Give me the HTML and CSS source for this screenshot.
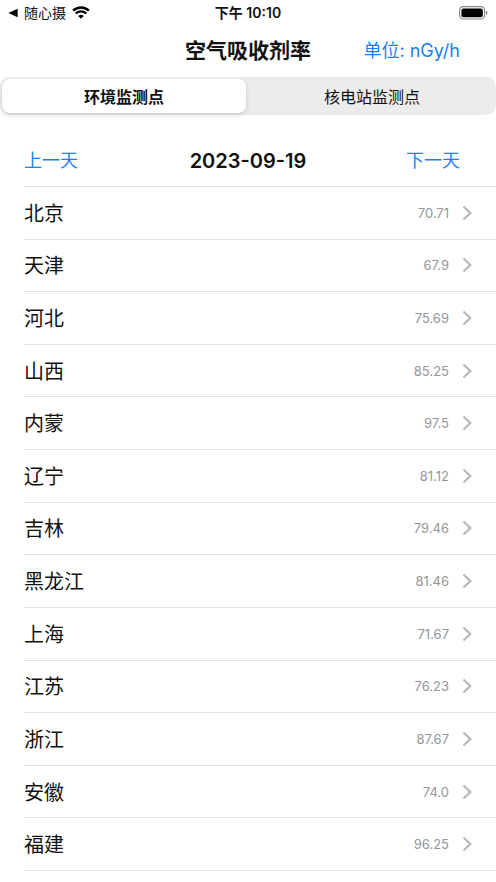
FILE: index.html
```html
<!DOCTYPE html>
<html lang="zh-CN">
<head>
<meta charset="utf-8">
<meta name="viewport" content="width=device-width, initial-scale=1">
<title>空气吸收剂率</title>
<link rel="stylesheet" href="styles.css">
</head>
<body>
<div class="status">
  <a class="status-back" href="#">
    <svg class="icon-back" viewBox="0 0 10 10" aria-hidden="true"><path d="M0.3 5 9.6 0.7V9.3Z"/></svg>
    <span>随心摄</span>
    <svg class="icon-wifi" viewBox="0 0 18 13" aria-hidden="true">
      <path d="M1.1 4.7a11.4 11.4 0 0 1 15.8 0M3.8 7.5a7.5 7.5 0 0 1 10.4 0"/>
      <path class="solid" d="M9 12.8 6.2 10a4 4 0 0 1 5.6 0Z"/>
    </svg>
  </a>
  <span class="status-time">下午 10:10</span>
  <svg class="icon-battery" viewBox="0 0 29 14" aria-hidden="true">
    <rect class="shell" x="0.6" y="0.6" width="25" height="12.4" rx="3.6"/>
    <rect x="2.4" y="2.4" width="21.4" height="8.8" rx="2"/>
    <path class="cap" d="M27 4.8c1.9.5 1.9 3.5 0 4Z"/>
  </svg>
</div>
<header class="bar navbar">
  <h1 class="title">空气吸收剂率</h1>
  <button class="link end" type="button">单位: nGy/h</button>
</header>
<div class="segments" role="tablist">
  <button class="segment selected" type="button" role="tab" aria-selected="true">环境监测点</button>
  <button class="segment" type="button" role="tab" aria-selected="false">核电站监测点</button>
</div>
<nav class="bar datebar">
  <button class="link start" type="button">上一天</button>
  <h2 class="date">2023-09-19</h2>
  <button class="link end" type="button">下一天</button>
</nav>
<ul class="list">
  <li><a class="row" href="#"><span class="name">北京</span><span class="value">70.71</span><svg class="chevron" viewBox="0 0 10 16" aria-hidden="true"><path d="M1.5 1.5 8.3 8l-6.8 6.5"/></svg></a></li>
  <li><a class="row" href="#"><span class="name">天津</span><span class="value">67.9</span><svg class="chevron" viewBox="0 0 10 16" aria-hidden="true"><path d="M1.5 1.5 8.3 8l-6.8 6.5"/></svg></a></li>
  <li><a class="row" href="#"><span class="name">河北</span><span class="value">75.69</span><svg class="chevron" viewBox="0 0 10 16" aria-hidden="true"><path d="M1.5 1.5 8.3 8l-6.8 6.5"/></svg></a></li>
  <li><a class="row" href="#"><span class="name">山西</span><span class="value">85.25</span><svg class="chevron" viewBox="0 0 10 16" aria-hidden="true"><path d="M1.5 1.5 8.3 8l-6.8 6.5"/></svg></a></li>
  <li><a class="row" href="#"><span class="name">内蒙</span><span class="value">97.5</span><svg class="chevron" viewBox="0 0 10 16" aria-hidden="true"><path d="M1.5 1.5 8.3 8l-6.8 6.5"/></svg></a></li>
  <li><a class="row" href="#"><span class="name">辽宁</span><span class="value">81.12</span><svg class="chevron" viewBox="0 0 10 16" aria-hidden="true"><path d="M1.5 1.5 8.3 8l-6.8 6.5"/></svg></a></li>
  <li><a class="row" href="#"><span class="name">吉林</span><span class="value">79.46</span><svg class="chevron" viewBox="0 0 10 16" aria-hidden="true"><path d="M1.5 1.5 8.3 8l-6.8 6.5"/></svg></a></li>
  <li><a class="row" href="#"><span class="name">黑龙江</span><span class="value">81.46</span><svg class="chevron" viewBox="0 0 10 16" aria-hidden="true"><path d="M1.5 1.5 8.3 8l-6.8 6.5"/></svg></a></li>
  <li><a class="row" href="#"><span class="name">上海</span><span class="value">71.67</span><svg class="chevron" viewBox="0 0 10 16" aria-hidden="true"><path d="M1.5 1.5 8.3 8l-6.8 6.5"/></svg></a></li>
  <li><a class="row" href="#"><span class="name">江苏</span><span class="value">76.23</span><svg class="chevron" viewBox="0 0 10 16" aria-hidden="true"><path d="M1.5 1.5 8.3 8l-6.8 6.5"/></svg></a></li>
  <li><a class="row" href="#"><span class="name">浙江</span><span class="value">87.67</span><svg class="chevron" viewBox="0 0 10 16" aria-hidden="true"><path d="M1.5 1.5 8.3 8l-6.8 6.5"/></svg></a></li>
  <li><a class="row" href="#"><span class="name">安徽</span><span class="value">74.0</span><svg class="chevron" viewBox="0 0 10 16" aria-hidden="true"><path d="M1.5 1.5 8.3 8l-6.8 6.5"/></svg></a></li>
  <li><a class="row" href="#"><span class="name">福建</span><span class="value">96.25</span><svg class="chevron" viewBox="0 0 10 16" aria-hidden="true"><path d="M1.5 1.5 8.3 8l-6.8 6.5"/></svg></a></li>
</ul>
</body>
</html>
```
FILE: styles.css
```css
* {
  box-sizing: border-box;
}

body {
  margin: 0;
  min-height: 100vh;
  display: flex;
  flex-direction: column;
  background: #fff;
  color: #111;
  font-family: Inter, "Noto Sans CJK SC", sans-serif;
}

button {
  margin: 0;
  padding: 0;
  border: 0;
  background: none;
  color: inherit;
  font: inherit;
  cursor: pointer;
}

a {
  color: inherit;
  text-decoration: none;
}

h1,
h2,
ul {
  margin: 0;
  padding: 0;
}

/* Status bar */
.status {
  display: grid;
  grid-template-columns: 1fr auto 1fr;
  align-items: center;
  height: 25px;
  padding: 0 8px;
  font-size: 14px;
  line-height: 24px;
}

.status-back {
  display: flex;
  align-items: center;
  gap: 6px;
}

.status-time {
  font-weight: 600;
}

.icon-back {
  width: 10px;
  height: 10px;
}

.icon-wifi {
  width: 18px;
  height: 13px;
  fill: none;
  stroke: #000;
  stroke-width: 2.4;
}

.icon-wifi .solid {
  fill: #000;
  stroke: none;
}

.icon-battery {
  width: 29px;
  height: 14px;
  justify-self: end;
}

.icon-battery .shell {
  fill: none;
  stroke: #8a8a8a;
  stroke-width: 1.2;
}

.icon-battery .cap {
  fill: #8a8a8a;
}

/* Title and date bars */
.bar {
  display: grid;
  grid-template-columns: 1fr auto 1fr;
  align-items: center;
}

.navbar {
  height: 52px;
  padding: 0 24px;
}

.title {
  grid-column: 2;
  font-size: 21px;
  font-weight: 600;
  line-height: 30px;
}

.link {
  color: #1a7ff5;
  font-size: 18px;
  line-height: 28px;
}

.link.start {
  justify-self: start;
}

.link.end {
  justify-self: end;
  padding-right: 12px;
}

/* Segmented control */
.segments {
  display: grid;
  grid-template-columns: 1fr 1fr;
  gap: 4px;
  height: 38px;
  padding: 2px;
  border-radius: 10px;
  background: #ececec;
}

.segment {
  border-radius: 8px;
  font-size: 16px;
}

.segment.selected {
  background: #fff;
  box-shadow: 0 2px 5px rgba(0, 0, 0, 0.14);
  font-weight: 600;
}

/* Day navigation: the rule runs to the right edge, the date is centred on the page */
.datebar {
  height: 54px;
  margin: 18px 0 0 24px;
  padding: 2px 24px 0 0;
  border-bottom: 1px solid #e2e2e2;
}

.date {
  font-size: 20px;
  font-weight: 600;
  line-height: 28px;
}

/* Stations share the remaining height evenly */
.list {
  flex: 1;
  display: grid;
  grid-auto-rows: minmax(44px, 1fr);
  padding: 0 0 11px 24px;
  list-style: none;
}

.row {
  display: flex;
  align-items: center;
  height: 100%;
  padding-right: 24px;
  border-bottom: 1px solid #e2e2e2;
}

.name {
  flex: 1;
  padding-top: 2px;
  font-size: 20px;
  line-height: 28px;
}

.value {
  color: #969698;
  font-size: 13px;
}

.chevron {
  width: 10px;
  height: 16px;
  margin-left: 13px;
  fill: none;
  stroke: #b8b8bb;
  stroke-width: 2.2;
}
```
